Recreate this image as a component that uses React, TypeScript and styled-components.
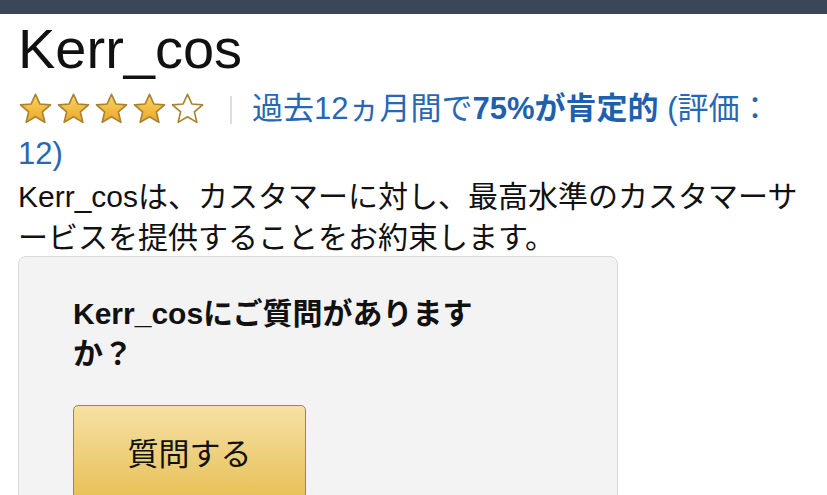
import React from "react";
import styled, { createGlobalStyle } from "styled-components";

const GlobalStyle = createGlobalStyle`
  html, body {
    margin: 0;
    padding: 0;
    background: #ffffff;
  }
  body {
    font-family: "Liberation Sans", "Noto Sans CJK JP", sans-serif;
    color: #111111;
    overflow: hidden;
  }
`;

const Page = styled.div`
  width: 827px;
  height: 495px;
  overflow: hidden;
  background: #ffffff;
`;

const TopBar = styled.div`
  height: 14px;
  background: #3a4758;
`;

const Content = styled.div`
  padding: 2px 17px 0 18px;
`;

const Title = styled.h1`
  margin: 0;
  font-size: 56px;
  line-height: 66px;
  font-weight: 400;
  color: #111111;
`;

const RatingLine = styled.div`
  margin-top: 4px;
  font-size: 31px;
  line-height: 45px;
  color: #2767b3;
  padding-right: 20px;
`;

const Stars = styled.span`
  display: inline-flex;
  gap: 3px;
  vertical-align: -7px;
`;

const Separator = styled.span`
  display: inline-block;
  width: 2px;
  height: 28px;
  background: #dddddd;
  margin: 0 20px 0 25px;
  vertical-align: -5px;
`;

const Strong = styled.b`
  font-weight: 700;
  color: #1f5fae;
`;

const Description = styled.p`
  margin: 0;
  font-size: 30px;
  line-height: 41px;
  color: #111111;
`;

const Card = styled.div`
  margin-top: -2px;
  width: 600px;
  box-sizing: border-box;
  background: #f3f3f3;
  border: 1px solid #d9d9d9;
  border-radius: 8px;
  padding: 37px 54px 40px;
`;

const CardHeading = styled.h2`
  margin: 0;
  max-width: 420px;
  font-size: 30px;
  line-height: 40px;
  font-weight: 700;
  color: #111111;
`;

const AskButton = styled.button`
  margin-top: 31px;
  width: 233px;
  height: 94px;
  box-sizing: border-box;
  border: 1.5px solid #a88734;
  border-radius: 5px;
  background: linear-gradient(to bottom, #f6e0a4, #e7c158);
  font-family: "Liberation Sans", "Noto Sans CJK JP", sans-serif;
  font-size: 31px;
  color: #111111;
  padding: 0 0 2px;
  cursor: pointer;
`;

const Star: React.FC<{ filled: boolean }> = ({ filled }) => (
  <svg width="35" height="34" viewBox="0 0 34 33">
    <defs>
      <linearGradient id="starGold" x1="0" y1="0" x2="0" y2="1">
        <stop offset="0" stopColor="#fbd560" />
        <stop offset="1" stopColor="#eba62c" />
      </linearGradient>
    </defs>
    <path
      d="M17 2.2 L21.2 11.6 L31.6 12.5 L23.7 19.3 L26.1 29.5 L17 24.1 L7.9 29.5 L10.3 19.3 L2.4 12.5 L12.8 11.6 Z"
      fill={filled ? "url(#starGold)" : "#ffffff"}
      stroke="#a9822f"
      strokeWidth="1.6"
      strokeLinejoin="round"
    />
  </svg>
);

export default function App() {
  const rating = 4;
  return (
    <Page>
      <GlobalStyle />
      <TopBar />
      <Content>
        <Title>Kerr_cos</Title>
        <RatingLine>
          <Stars>
            {[0, 1, 2, 3, 4].map((i) => (
              <Star key={i} filled={i < rating} />
            ))}
          </Stars>
          <Separator />
          過去12ヵ月間で<Strong>75%が肯定的</Strong> (評価：12)
        </RatingLine>
        <Description>
          Kerr_cosは、カスタマーに対し、最高水準のカスタマーサービスを提供することをお約束します。
        </Description>
        <Card>
          <CardHeading>Kerr_cosにご質問がありますか？</CardHeading>
          <AskButton>質問する</AskButton>
        </Card>
      </Content>
    </Page>
  );
}
